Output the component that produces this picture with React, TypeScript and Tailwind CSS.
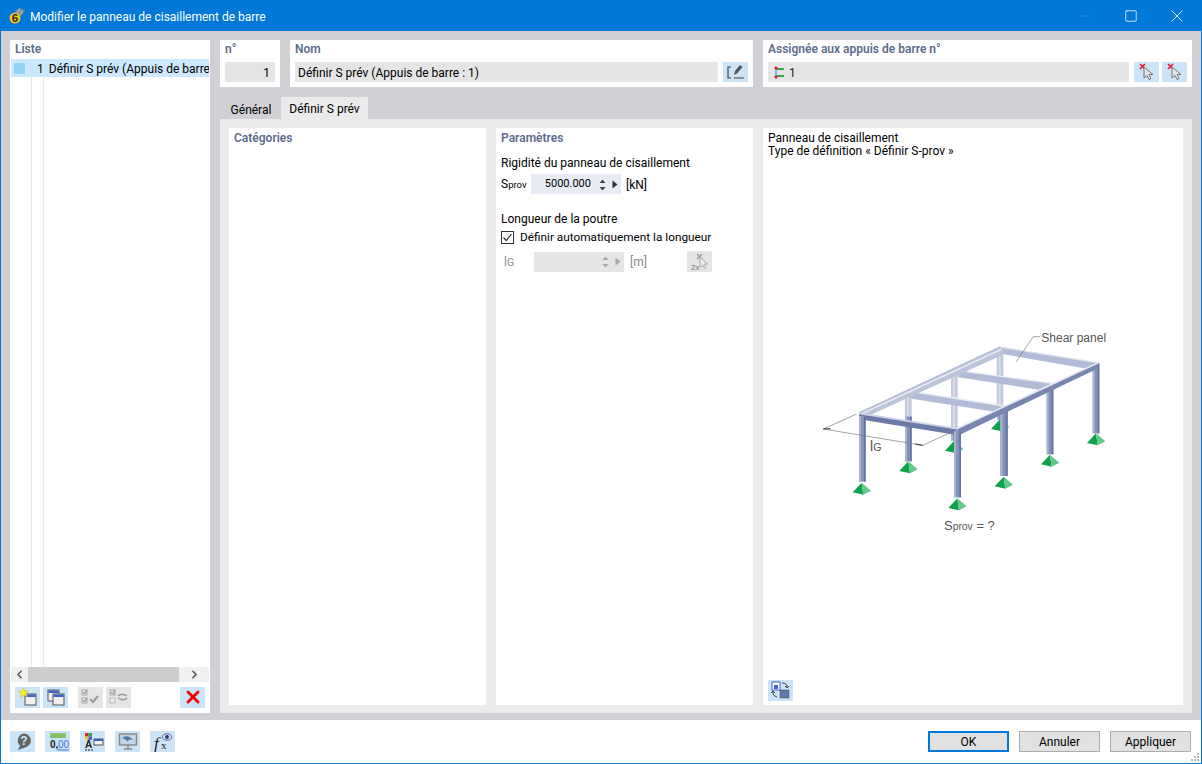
import React from 'react';
import { ChevronLeft, ChevronRight, Minus, Square, X } from 'lucide-react';

const IconBtn = ({ children, off, cls }: { children?: React.ReactNode; off?: boolean; cls?: string }) => (
  <div className={`flex items-center justify-center w-[25px] h-[21px] shrink-0 ${off ? 'bg-[#e5e5e5]' : 'bg-[#cce4f7]'} ${cls || ''}`}>
    {children}
  </div>
);

const Win = ({ x, y }: { x: number; y: number }) => (
  <g>
    <rect x={x} y={y} width="11" height="11" fill="#efefef" stroke="#555" />
    <rect x={x + 0.5} y={y + 0.5} width="10" height="2.500" fill="#3f62c8" />
  </g>
);

const PickIcon = () => (
  <svg width="20" height="18" viewBox="0 0 20 18">
    <path d="M3 1l5 5M8 1L3 6" stroke="#e8112d" strokeWidth="1.500" />
    <path d="M7 4v11l3-2.500 2 4 2-1-2-4h4z" fill="#e4e4e4" stroke="#777" />
  </svg>
);

const Frame = () => {
  const foot = (x: number, y: number, k: number) => (
    <g key={k}>
      <path d={`M${x - 27} ${y + 15}L${x} ${y - 14}L${x + 5} ${y + 22}z`} fill="#10a14a" />
      <path d={`M${x} ${y - 14}L${x + 28} ${y + 10}L${x + 5} ${y + 22}z`} fill="#63c98b" />
    </g>
  );
  const col = (x: number, y1: number, y2: number, k: number, w = 20) => (
    <g key={k}>
      <rect x={x} y={y1} width={w} height={y2 - y1} fill="#8391bb" />
      <rect x={x} y={y1} width={w * 0.3} height={y2 - y1} fill="#aab4d2" />
      <rect x={x + w * 0.75} y={y1} width={w * 0.25} height={y2 - y1} fill="#6574a3" />
    </g>
  );
  const lightCol = (x: number, y1: number, y2: number, k: number) => (
    <g key={k}>
      <rect x={x} y={y1} width="20" height={y2 - y1} fill="#c3cade" />
      <rect x={x + 6} y={y1} width="6" height={y2 - y1} fill="#d9dde9" />
    </g>
  );
  return (
    <svg width="320" height="220" viewBox="0 0 960 660" className="block">
      {foot(600, 312, 1)}
      {foot(462, 377, 2)}
      {foot(888, 354, 3)}
      {foot(750, 418, 4)}
      {foot(325, 438, 5)}
      {foot(611, 484, 6)}
      {foot(185, 502, 7)}
      {foot(472, 549, 8)}
      {lightCol(590, 95, 280, 20)}
      {lightCol(453, 165, 330, 21)}
      {lightCol(315, 228, 295, 22)}
      {col(453, 335, 362, 9)}
      {col(591, 272, 300, 10)}
      {col(315, 290, 424, 11)}
      <path d="M325 213L612 258L612 280L335 236z" fill="#b3bcd6" />
      <path d="M325 213L612 258" stroke="#e9ecf4" strokeWidth="4" />
      <path d="M465 150L757 190L735 212L475 172z" fill="#b3bcd6" />
      <path d="M465 150L757 190" stroke="#e9ecf4" strokeWidth="4" />
      <path d="M600 80L895 128L870 148L612 103z" fill="#b3bcd6" />
      <path d="M600 81L893 128" stroke="#e4e8f2" strokeWidth="4" />
      <path d="M177 278L600 80L612 103L196 292z" fill="#bcc4da" />
      <path d="M177 278L600 80" stroke="#9aa5c4" strokeWidth="2" />
      <path d="M186 281L604 88" stroke="#edf0f6" strokeWidth="4" />
      {col(740, 205, 403, 12)}
      {col(878, 130, 340, 13)}
      {col(601, 265, 468, 14, 22)}
      <path d="M470 326L895 128L895 145L478 345z" fill="#7886ae" />
      <path d="M470 326L895 128" stroke="#e4e8f2" strokeWidth="5" />
      <path d="M177 278L470 326L470 345L177 298z" fill="#6c7aa6" />
      <path d="M177 280L470 326" stroke="#cfd5e6" strokeWidth="5" />
      {col(177, 288, 485, 15)}
      {col(462, 334, 532, 16, 21)}
      <path d="M648 126L700 50L720 50" fill="none" stroke="#777" strokeWidth="2" />
      <path d="M70 327L170 282M70 327L368 376M368 376L455 336" fill="none" stroke="#777" strokeWidth="2" />
      <path d="M70 327L92 326M368 376L346 372" stroke="#333" strokeWidth="3" />
      <text x="724" y="67" fontSize="36" fill="#555" fontFamily="Liberation Sans, sans-serif">Shear panel</text>
      <text x="210" y="394" fontSize="42" fill="#555" fontFamily="Liberation Sans, sans-serif">l<tspan fontSize="32">G</tspan></text>
      <text x="432" y="631" fontSize="39" fill="#555" fontFamily="Liberation Sans, sans-serif">S<tspan fontSize="31">prov</tspan> = ?</text>
    </svg>
  );
};

const Card = ({ title, cls, children }: { title: string; cls: string; children: React.ReactNode }) => (
  <div className={`bg-white px-[5px] pt-[1px] h-[47px] ${cls}`}>
    <div className="font-semibold text-[#5c6b8c] h-[21px] leading-[17px]">{title}</div>
    <div className="flex gap-[5px] items-center">{children}</div>
  </div>
);

const Spin = ({ off }: { off?: boolean }) => (
  <div className="flex items-center gap-[5px] pr-[3px]">
    <svg width="9" height="14" viewBox="0 0 9 14" className="ml-[7px]">
      <path d="M4.500 1.500L1.500 5h6zM4.500 12.500L1.500 9h6z" fill={off ? '#a8a8a8' : '#444'} />
    </svg>
    <svg width="6" height="9" viewBox="0 0 6 9">
      <path d="M0.500 0.500L5.500 4.500L0.500 8.500z" fill={off ? '#a8a8a8' : '#333'} />
    </svg>
  </div>
);

const FootBtn = ({ label, def }: { label: string; def?: boolean }) => (
  <div className={`w-[81px] h-[21px] pt-[1px] flex items-center justify-center bg-[#e1e1e1] text-black ${def ? 'border-2 border-[#0078d7]' : 'border border-[#adadad]'}`}>
    {label}
  </div>
);

export default function App() {
  return (
    <div
      className="w-[1202px] h-[764px] flex flex-col border border-[#0078d7] bg-white text-[12px] text-black overflow-hidden relative"
      style={{ fontFamily: 'Roboto, sans-serif' }}
    >
      <div className="h-[30px] bg-[#0078d7] flex items-center text-white shrink-0">
        <svg width="18" height="18" viewBox="0 0 18 18" className="ml-[7px] mr-[4px]">
          <path d="M7 4L12 1l5 3-5 6z" fill="#7c828f" />
          <path d="M8 4l6 3M10 2.500l5 3M12 1l-3 6M15 2.500l-3 6" stroke="#c5c9d2" strokeWidth=".5" />
          <circle cx="7" cy="11" r="5.500" fill="#f5c518" />
          <text x="3.800" y="15.200" fontSize="11.500" fontWeight="700" fill="#2a2a2a" fontFamily="Liberation Sans">6</text>
        </svg>
        <span className="text-[12px] pt-[1px]">Modifier le panneau de cisaillement de barre</span>
        <div className="ml-auto flex items-center">
          <div className="w-[46px] flex justify-center"><Minus size={14} strokeWidth={1} color="#3f97e0" /></div>
          <div className="w-[46px] flex justify-center"><Square size={14} strokeWidth={1.300} color="#fff" /></div>
          <div className="w-[46px] flex justify-center mr-[1px]"><X size={20} strokeWidth={1} color="#fff" /></div>
        </div>
      </div>

      <div className="h-[689px] bg-[#d1d0d5] flex gap-[10px] pl-[9px] pr-[9px] pt-[9px] pb-[7px] shrink-0">
        <div className="w-[200px] bg-white flex flex-col">
          <div className="h-[19px] pl-[5px] pt-[1px] font-semibold text-[#5c6b8c] leading-[16px]">Liste</div>
          <div className="flex-1 mx-[1px] flex flex-col">
            <div className="h-[18px] bg-[#cce8ff] flex items-center whitespace-nowrap overflow-hidden">
              <div className="w-[11px] h-[11px] bg-[#90d5f7] ml-[3px] shrink-0" />
              <span className="ml-[12px] pt-[1px]">1</span>
              <span className="ml-[5px] pt-[1px]">Définir S prév (Appuis de barre :</span>
            </div>
            <div className="flex-1 flex">
              <div className="w-[21px] border-r border-[#e8e8e8]" />
              <div className="w-[12px] border-r border-[#e8e8e8]" />
            </div>
          </div>
          <div className="h-[15px] mx-[1px] bg-[#f0f0f0] flex items-center">
            <div className="w-[17px] flex justify-center"><ChevronLeft size={13} strokeWidth={3} color="#555" /></div>
            <div className="h-[15px] w-[151px] bg-[#cdcdcd]" />
            <div className="flex-1 flex justify-center"><ChevronRight size={13} strokeWidth={3} color="#555" /></div>
          </div>
          <div className="h-[31px] flex items-center pl-[5px] pb-[1px]">
            <IconBtn>
              <svg width="22" height="19" viewBox="0 0 22 19">
                <Win x={8} y={6} />
                <path d="M6.500 0l1.300 3.200 3.400-.4-2.200 2.600 1.300 3.200-3.500-1.600L3.500 9.500l.5-3.500L1.500 3.500l3.200-.3z" fill="#f7ee2c" stroke="#c9b90e" strokeWidth=".5" />
              </svg>
            </IconBtn>
            <IconBtn cls="ml-[3px]">
              <svg width="22" height="19" viewBox="0 0 22 19">
                <Win x={3} y={2} />
                <Win x={8} y={6} />
              </svg>
            </IconBtn>
            <IconBtn off cls="ml-[10px]">
              <svg width="20" height="18" viewBox="0 0 20 18">
                <rect x="1" y="2" width="5" height="5" fill="none" stroke="#aaa" />
                <rect x="1" y="10" width="5" height="5" fill="none" stroke="#aaa" />
                <path d="M2 4l1.500 2L6 2M2 12l1.500 2L6 10" fill="none" stroke="#888" />
                <path d="M9 11l3 3 5-6" fill="none" stroke="#999" strokeWidth="2" />
              </svg>
            </IconBtn>
            <IconBtn off cls="ml-[3px]">
              <svg width="20" height="18" viewBox="0 0 20 18">
                <rect x="1" y="2" width="5" height="5" fill="none" stroke="#aaa" />
                <rect x="1" y="10" width="5" height="5" fill="#eee" stroke="#bbb" />
                <path d="M2 4l1.500 2L6 2" fill="none" stroke="#888" />
                <path d="M9 8c3-3 6-2 9 0M18 10c-3 3-6 2-9 0" fill="none" stroke="#999" strokeWidth="1.500" />
              </svg>
            </IconBtn>
            <IconBtn cls="ml-[49px]">
              <X size={20} strokeWidth={3.400} color="#f00000" />
            </IconBtn>
          </div>
        </div>

        <div className="w-[972px] flex flex-col">
          <div className="flex gap-[10px] h-[47px]">
            <Card title="n°" cls="w-[60px]">
              <div className="w-[50px] h-[20px] pt-[1px] bg-[#e5e5e5] flex items-center justify-end pr-[5px]">1</div>
            </Card>
            <Card title="Nom" cls="w-[463px]">
              <div className="w-[423px] h-[20px] pt-[1px] bg-[#e5e5e5] flex items-center pl-[3px]">Définir S prév (Appuis de barre : 1)</div>
              <IconBtn cls="!h-[20px]">
                <svg width="20" height="16" viewBox="0 0 20 16">
                  <path d="M5 3H2v11h3M8 14h10" fill="none" stroke="#444" strokeWidth="1.200" />
                  <path d="M8 11l1-4 5-6 2.500 2-5 6z" fill="#555" />
                </svg>
              </IconBtn>
            </Card>
            <Card title="Assignée aux appuis de barre n°" cls="w-[429px]">
              <div className="w-[361px] h-[20px] pt-[1px] bg-[#e5e5e5] flex items-center pl-[6px]">
                <svg width="11" height="13" viewBox="0 0 11 13">
                  <path d="M2 1.500v10" stroke="#7fb5e8" strokeWidth="2" />
                  <path d="M3 3h7M3 10h7" stroke="#2da84a" strokeWidth="2" />
                  <circle cx="2" cy="2" r="1.600" fill="#e8112d" />
                  <circle cx="2" cy="11" r="1.600" fill="#e8112d" />
                </svg>
                <span className="ml-[4px] text-[#2b0a3d]">1</span>
              </div>
              <IconBtn cls="!h-[20px]"><PickIcon /></IconBtn>
              <IconBtn cls="!h-[20px] -ml-[2px]"><PickIcon /></IconBtn>
            </Card>
          </div>

          <div className="h-[32px] flex items-end pl-[1px]">
            <div className="w-[60px] h-[20px] pt-[2px] flex items-center justify-center">Général</div>
            <div className="w-[87px] h-[22px] pt-[2px] bg-[#ebebeb] flex items-center justify-center">Définir S prév</div>
          </div>

          <div className="flex-1 bg-[#ebebeb] pt-[9px] pb-[8px] pl-[9px] pr-[9px] flex gap-[10px] min-h-0">
            <div className="w-[257px] bg-white pl-[5px] pt-[1px]">
              <div className="font-semibold text-[#5c6b8c] leading-[18px]">Catégories</div>
            </div>
            <div className="w-[257px] bg-white pl-[5px] pt-[1px]">
              <div className="font-semibold text-[#5c6b8c] leading-[18px]">Paramètres</div>
              <div className="mt-[9px] leading-[15px]">Rigidité du panneau de cisaillement</div>
              <div className="flex items-center mt-[3px] h-[20px]">
                <div className="w-[30px] leading-none">S<span className="text-[9.500px]">prov</span></div>
                <div className="w-[90px] h-[20px] pt-[1px] bg-[#e8ebf3] flex items-center justify-end">
                  <span className="text-[11px]">5000.000</span>
                  <Spin />
                </div>
                <span className="ml-[5px] pt-[1px]">[kN]</span>
              </div>
              <div className="mt-[18px] leading-[14px]">Longueur de la poutre</div>
              <div className="flex items-center mt-[3px] h-[17px]">
                <div className="w-[13px] h-[13px] border border-[#333] flex items-center justify-center">
                  <svg width="11" height="11" viewBox="0 0 11 11"><path d="M1.500 5.500L4.300 8.500L9.500 2" fill="none" stroke="#333" strokeWidth="1.200" /></svg>
                </div>
                <span className="ml-[6px] text-[11.800px]">Définir automatiquement la longueur</span>
              </div>
              <div className="flex items-center mt-[5px] h-[21px] text-[#8a8a8a]">
                <div className="w-[33px] pl-[3px]">l<span className="text-[10.500px]">G</span></div>
                <div className="w-[90px] h-[20px] bg-[#e5e5e5] flex items-center justify-end"><Spin off /></div>
                <span className="ml-[6px] w-[20px]">[m]</span>
                <IconBtn off cls="ml-[37px]">
                  <svg width="20" height="18" viewBox="0 0 20 18">
                    <path d="M7 1l5 5M12 1L7 6" stroke="#999" strokeWidth="1.200" />
                    <path d="M10 4v10l2.500-2 2 3.500 1.500-1-2-3.500h3.500z" fill="#eee" stroke="#aaa" />
                    <text x="1" y="17" fontSize="8" fill="#777" fontFamily="Liberation Sans">2x</text>
                  </svg>
                </IconBtn>
              </div>
            </div>
            <div className="w-[420px] bg-white pl-[5px] pt-[4px] pb-[4px] flex flex-col">
              <div className="leading-[13px]">Panneau de cisaillement</div>
              <div className="leading-[13px]">Type de définition « Définir S-prov »</div>
              <div className="ml-[32px] mt-[162px]"><Frame /></div>
              <IconBtn cls="mt-auto">
                <svg width="22" height="19" viewBox="0 0 22 19">
                  <rect x="2" y="1" width="8" height="8" fill="#fff" stroke="#3f62c8" />
                  <rect x="4" y="4" width="4" height="4" fill="#3f62c8" />
                  <path d="M12 2c3 0 5 1 5 4M15 5l2 2 2-2M3 11c0 3 1 4 4 5M1 12l2-2 2 2" fill="none" stroke="#444" />
                  <rect x="10" y="9" width="9" height="8" fill="#5f7da8" stroke="#445" strokeWidth=".5" />
                </svg>
              </IconBtn>
            </div>
          </div>
        </div>
      </div>

      <div className="flex-1 flex items-center pl-[9px] pr-[10px] gap-[10px]">
        <IconBtn>
          <svg width="22" height="19" viewBox="0 0 22 19">
            <path d="M12 1.500a7 7 0 0 1 1 13.900L6 18l2-4.500A7 7 0 0 1 12 1.500z" fill="#666" />
            <text x="8.300" y="13" fontSize="12" fontWeight="700" fill="#cce4f7" fontFamily="Liberation Sans">?</text>
          </svg>
        </IconBtn>
        <IconBtn>
          <svg width="24" height="20" viewBox="0 0 24 20">
            <rect x="4" y="1" width="16" height="5" fill="#8fc56a" />
            <path d="M6 3v3M9 3v3M12 3v3M15 3v3M18 3v3" stroke="#5f9a3c" strokeWidth=".6" />
            <text x="4" y="16" fontSize="10" fontWeight="700" fill="#222" fontFamily="Liberation Sans">0,</text>
            <text x="12" y="16" fontSize="10" fill="#3f72d8" fontFamily="Liberation Sans">00</text>
            <path d="M12 18h11" stroke="#3f72d8" />
          </svg>
        </IconBtn>
        <IconBtn>
          <svg width="22" height="19" viewBox="0 0 22 19">
            <rect x="3" y="1" width="3.500" height="3.500" fill="#d8291c" />
            <rect x="6.500" y="1" width="3.500" height="3.500" fill="#2ea84a" />
            <rect x="3" y="4.500" width="3.500" height="3.500" fill="#f2c230" />
            <rect x="6.500" y="4.500" width="3.500" height="3.500" fill="#3f62c8" />
            <text x="3" y="16" fontSize="10" fontWeight="700" fill="#222" fontFamily="Liberation Sans">A</text>
            <rect x="12" y="7" width="9" height="6" fill="#f2f2f2" stroke="#555" />
            <rect x="12" y="7" width="9" height="2" fill="#3f62c8" />
            <path d="M3 18h8" stroke="#222" strokeDasharray="2 1" />
          </svg>
        </IconBtn>
        <IconBtn>
          <svg width="22" height="19" viewBox="0 0 22 19">
            <rect x="2.500" y="2" width="17" height="11" fill="#c5d6e4" stroke="#8a8a8a" strokeWidth="1.500" />
            <path d="M5 6c4-3 8-2 11 2-3-1-5-1-5 2-1-2-3-3-6-4z" fill="#4f7ba6" />
            <path d="M11 13v3M7 17h8" stroke="#888" strokeWidth="1.500" />
          </svg>
        </IconBtn>
        <IconBtn>
          <svg width="24" height="20" viewBox="0 0 24 20">
            <text x="3" y="17" fontSize="17" fontStyle="italic" fill="#222" fontFamily="Liberation Serif">f</text>
            <text x="10" y="17" fontSize="11" fill="#222" fontFamily="Liberation Serif">x</text>
            <ellipse cx="16" cy="5" rx="4.500" ry="3.200" fill="#dfe3f4" stroke="#5468a8" />
            <circle cx="16" cy="5" r="2" fill="#2c3a7c" />
          </svg>
        </IconBtn>
        <div className="ml-auto flex gap-[10px]">
          <FootBtn label="OK" def />
          <FootBtn label="Annuler" />
          <FootBtn label="Appliquer" />
        </div>
      </div>
      <svg width="10" height="10" viewBox="0 0 10 10" className="absolute right-[1px] bottom-[1px]">
        <path d="M7 1h2v2H7zM4 4h2v2H4zM7 4h2v2H7zM1 7h2v2H1zM4 7h2v2H4zM7 7h2v2H7z" fill="#b8b8b8" />
      </svg>
    </div>
  );
}
